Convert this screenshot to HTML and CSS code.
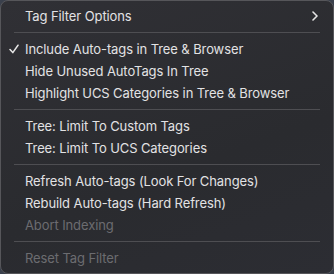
FILE: index.html
```html
<!DOCTYPE html>
<html lang="en">
<head>
    <meta charset="UTF-8">
    <title>Tag Filter Menu</title>
    <link rel="stylesheet" href="styles.css">
</head>
<body>

<!-- Menu contextuel -->
<div class="menu">
    <div class="item submenu">
        <span>Tag Filter Options</span>
        <svg class="chevron" width="6" height="10" viewBox="0 0 6 10">
            <path d="M1 1 L5 5 L1 9" fill="none" stroke="#e6e6e6" stroke-width="1.6" stroke-linecap="round" stroke-linejoin="round"/>
        </svg>
    </div>
    <div class="separator"></div>
    <div class="item checked">
        <svg class="check" width="10" height="10" viewBox="0 0 10 10">
            <path d="M1 5.5 L3.8 8.6 L9 1.2" fill="none" stroke="#e6e6e6" stroke-width="1.5" stroke-linecap="round" stroke-linejoin="round"/>
        </svg>
        <span>Include Auto-tags in Tree &amp; Browser</span>
    </div>
    <div class="item">Hide Unused AutoTags In Tree</div>
    <div class="item">Highlight UCS Categories in Tree &amp; Browser</div>
    <div class="separator"></div>
    <div class="item">Tree: Limit To Custom Tags</div>
    <div class="item">Tree: Limit To UCS Categories</div>
    <div class="separator"></div>
    <div class="item">Refresh Auto-tags (Look For Changes)</div>
    <div class="item">Rebuild Auto-tags (Hard Refresh)</div>
    <div class="item disabled">Abort Indexing</div>
    <div class="separator"></div>
    <div class="item disabled">Reset Tag Filter</div>
</div>

</body>
</html>
```

FILE: styles.css
```css
body {
    margin: 0;
    padding: 0;
    background: #3a404c;
    font-family: 'Inter', 'Liberation Sans', sans-serif;
    font-size: 13px;
    letter-spacing: -0.1px;
    color: #e2e2e4;
}

.menu {
    box-sizing: border-box;
    width: 334px;
    height: 274px;
    padding: 4px 0;
    border: 1px solid #56565a;
    border-radius: 8px;
    background: linear-gradient(160deg, #303035, #2a2b2f 60%, #2c2d33);
}

.item {
    position: relative;
    display: flex;
    align-items: center;
    height: 22px;
    padding-left: 24px;
    padding-right: 15px;
}

.submenu {
    justify-content: space-between;
}

.check {
    position: absolute;
    left: 8px;
    top: 6px;
}

.disabled {
    color: #6c6c70;
}

.separator {
    height: 1px;
    margin: 5px 13px 5px 13px;
    background: #4e4e52;
}
```
